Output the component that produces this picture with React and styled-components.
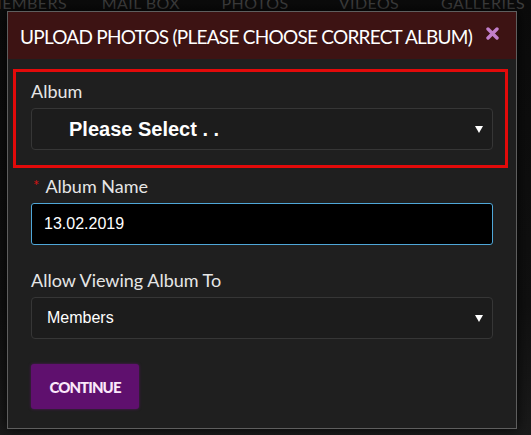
import React from "react";
import styled, { createGlobalStyle } from "styled-components";

const GlobalStyle = createGlobalStyle`
  html, body {
    margin: 0;
    padding: 0;
    background: #0c0c0c;
  }
  body {
    width: 531px;
    height: 435px;
    overflow: hidden;
    font-family: Lato, "Liberation Sans", sans-serif;
  }
`;

const navItems = ["MEMBERS", "MAIL BOX", "PHOTOS", "VIDEOS", "GALLERIES"];

const App = () => {
  return (
    <Page>
      <GlobalStyle />
      <NavBar>
        {navItems.map((item) => (
          <NavItem key={item}>{item}</NavItem>
        ))}
      </NavBar>

      <Modal>
        <Header>
          <Title>UPLOAD PHOTOS (PLEASE CHOOSE CORRECT ALBUM)</Title>
          <CloseButton aria-label="close">
            <svg width="13" height="13" viewBox="0 0 13 13">
              <path
                d="M2 2 L11 11 M11 2 L2 11"
                stroke="#c27fcb"
                strokeWidth="3.4"
                strokeLinecap="round"
              />
            </svg>
          </CloseButton>
        </Header>

        <Body>
          <Highlight>
            <Label>Album</Label>
            <SelectBox $indent={37} $bold>
              Please Select . .
              <Caret />
            </SelectBox>
          </Highlight>

          <Field $top={7}>
            <Label>
              <Required>*</Required>Album Name
            </Label>
            <TextInput defaultValue="13.02.2019" />
          </Field>

          <Field $top={24}>
            <Label>Allow Viewing Album To</Label>
            <SelectBox $indent={15}>
              Members
              <Caret />
            </SelectBox>
          </Field>

          <ContinueButton>CONTINUE</ContinueButton>
        </Body>
      </Modal>
    </Page>
  );
};

const Caret = () => (
  <CaretIcon width="8" height="7" viewBox="0 0 8 7">
    <polygon points="0,0 8,0 4,7" fill="#ffffff" />
  </CaretIcon>
);

export default App;

const Page = styled.div`
  position: relative;
  width: 531px;
  height: 435px;
  overflow: hidden;
  background: linear-gradient(180deg, #0b0b0b 0%, #101010 70%, #1a1a1a 100%);
`;

const NavBar = styled.div`
  display: flex;
  align-items: center;
  height: 22px;
  margin: -9px 0 0 -30px;
`;

const NavItem = styled.div`
  flex: 0 0 114px;
  text-align: center;
  font-family: Lato, sans-serif;
  font-size: 16px;
  color: #3f3f3f;
  letter-spacing: 0.4px;
  white-space: nowrap;
`;

const Modal = styled.div`
  position: absolute;
  top: 11px;
  left: 7px;
  width: 508px;
  border: 1px solid #5e5e5e;
  background: #1f1f1f;
  box-shadow: 0 0 12px rgba(0, 0, 0, 0.8);
`;

const Header = styled.div`
  display: flex;
  align-items: center;
  justify-content: space-between;
  height: 47px;
  padding: 0 17px 0 12px;
  background: #3d1313;
`;

const Title = styled.div`
  font-family: Lato, sans-serif;
  font-size: 19px;
  letter-spacing: -0.75px;
  color: #ffffff;
  white-space: nowrap;
  padding-top: 2px;
`;

const CloseButton = styled.div`
  display: flex;
  align-items: center;
  margin-top: -5px;
`;

const Body = styled.div`
  padding: 10px 23px 19px 23px;
`;

const Highlight = styled.div`
  margin: 0 -15px 0 -18px;
  padding: 8px 12px 15px 15px;
  border: 3px solid #e20a0a;
`;

const Field = styled.div`
  margin-top: ${(p) => p.$top}px;
`;

const Label = styled.div`
  font-family: Lato, sans-serif;
  font-size: 18px;
  line-height: 22px;
  color: #e6e6e6;
  margin-bottom: 6px;
`;

const Required = styled.span`
  color: #d21414;
  font-size: 15px;
  margin: 0 6px 0 2px;
  vertical-align: top;
  position: relative;
  top: -1px;
`;

const SelectBox = styled.div`
  position: relative;
  display: flex;
  align-items: center;
  height: 42px;
  box-sizing: border-box;
  padding-left: ${(p) => p.$indent}px;
  border: 1px solid #363636;
  border-radius: 4px;
  background: #1c1c1c;
  font-family: "Liberation Sans", Arial, sans-serif;
  font-size: ${(p) => (p.$bold ? 20 : 16)}px;
  font-weight: ${(p) => (p.$bold ? 700 : 400)};
  color: #ffffff;
`;

const CaretIcon = styled.svg`
  position: absolute;
  right: 9px;
  top: 50%;
  margin-top: -3px;
`;

const TextInput = styled.input`
  display: block;
  width: 100%;
  height: 42px;
  box-sizing: border-box;
  padding: 0 12px;
  border: 1px solid #4fa7d8;
  border-radius: 3px;
  background: #000000;
  color: #ffffff;
  font-family: "Liberation Sans", Arial, sans-serif;
  font-size: 16px;
  outline: none;
`;

const ContinueButton = styled.button`
  display: flex;
  align-items: center;
  justify-content: center;
  margin-top: 25px;
  width: 108px;
  height: 45px;
  border: none;
  border-radius: 3px;
  background: #5f106e;
  box-shadow: 0 0 3px rgba(120, 20, 140, 0.6);
  color: #fbe8fb;
  font-family: Lato, sans-serif;
  font-size: 15px;
  font-weight: 900;
  letter-spacing: -0.9px;
  cursor: pointer;
  padding: 0;
`;
